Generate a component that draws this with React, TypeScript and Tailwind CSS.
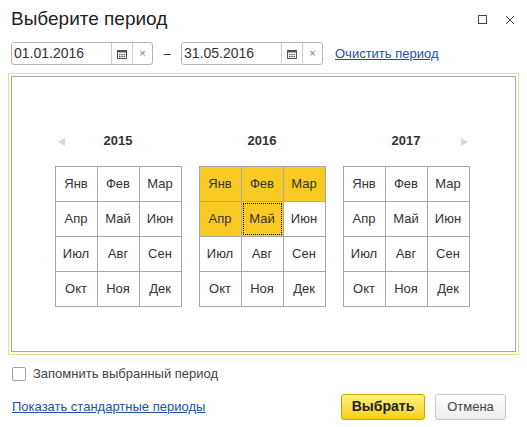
import React from "react";

const months = ["Янв","Фев","Мар","Апр","Май","Июн","Июл","Авг","Сен","Окт","Ноя","Дек"];

function Cal() {
  return (
    <svg width="10" height="10" viewBox="0 0 10 10">
      <rect x="0.5" y="1.5" width="9" height="8" fill="none" stroke="#555" />
      <rect x="0.5" y="1.5" width="9" height="2" fill="#555" />
      <rect x="2" y="5" width="1.5" height="1.2" fill="#555" /><rect x="4.3" y="5" width="1.5" height="1.2" fill="#555" /><rect x="6.6" y="5" width="1.5" height="1.2" fill="#555" />
      <rect x="2" y="7" width="1.5" height="1.2" fill="#555" /><rect x="4.3" y="7" width="1.5" height="1.2" fill="#555" /><rect x="6.6" y="7" width="1.5" height="1.2" fill="#555" />
    </svg>
  );
}

function DateInput({ v }: { v: string }) {
  return (
    <div className="flex h-[23px] w-[142px] rounded-[3px] border border-[#b5b5b5] bg-white">
      <div className="flex-1 pl-[2px] text-[14px] leading-[21px] text-[#333]">{v}</div>
      <div className="flex w-[21px] items-center justify-center border-l border-[#d0d0d0]"><Cal /></div>
      <div className="flex w-[20px] items-center justify-center border-l border-[#d0d0d0] text-[11px] text-[#777]">×</div>
    </div>
  );
}

function Year({ y, sel, focus, arrow }: { y: string; sel: number; focus?: number; arrow?: "l" | "r" }) {
  return (
    <div className="relative flex w-[127px] flex-col items-center">
      {arrow === "l" && <div className="absolute left-[3px] top-[7px] h-0 w-0 border-y-[4px] border-r-[7px] border-y-transparent border-r-[#d8d8d8]" />}
      {arrow === "r" && <div className="absolute right-[2px] top-[7px] h-0 w-0 border-y-[4px] border-l-[7px] border-y-transparent border-l-[#d8d8d8]" />}
      <div className="h-[35px] text-[13px] font-bold leading-[20px] text-[#333]">{y}</div>
      <div className="grid w-[127px] grid-cols-3 border-l border-t border-[#a8a8a8]">
        {months.map((m, i) => (
          <div key={m} className={`relative flex h-[35px] items-center justify-center border-b border-r border-[#a8a8a8] text-[13px] text-[#333] ${i < sel ? "bg-[#f9c924]" : "bg-white"}`}>
            {focus === i && <div className="absolute inset-[1px] border border-dotted border-black" />}
            {m}
          </div>
        ))}
      </div>
    </div>
  );
}

export default function App() {
  return (
    <div className="h-[427px] w-[527px] bg-white text-[#333]" style={{ fontFamily: "'Liberation Sans', Arial, sans-serif" }}>
      <div className="flex h-[38px] items-center pl-[11px] pr-[12px] pt-[1px]">
        <div className="flex-1 text-[19px] text-[#222]">Выберите период</div>
        <div className="mr-[18px] h-[9px] w-[9px] border border-[#444]" />
        <svg width="10" height="10" viewBox="0 0 10 10"><path d="M1 1L9 9M9 1L1 9" stroke="#444" strokeWidth="1" /></svg>
      </div>
      <div className="flex items-center pl-[11px] pt-[4px]">
        <DateInput v="01.01.2016" />
        <div className="w-[28px] text-center text-[13px]">–</div>
        <DateInput v="31.05.2016" />
        <a className="ml-[12px] text-[13px] text-[#1e50a2] underline">Очистить период</a>
      </div>
      <div className="mx-[8px] mt-[8px] border border-[#f0dc86] p-[2px]">
        <div className="flex h-[276px] justify-center gap-[17px] border border-[#a8a8a8] pr-[3px] pt-[54px]">
          <Year y="2015" sel={0} arrow="l" />
          <Year y="2016" sel={5} focus={4} />
          <Year y="2017" sel={0} arrow="r" />
        </div>
      </div>
      <div className="flex items-center pl-[12px] pt-[9px]">
        <div className="h-[14px] w-[14px] rounded-[2px] border border-[#a0a0a0] bg-white" />
        <span className="ml-[7px] text-[13px] text-[#444]">Запомнить выбранный период</span>
      </div>
      <div className="flex items-center pl-[12px] pr-[21px] pt-[10px]">
        <a className="flex-1 text-[13px] text-[#1e50a2] underline">Показать стандартные периоды</a>
        <div className="flex h-[26px] w-[84px] items-center justify-center rounded-[3px] border border-[#c9a400] bg-gradient-to-b from-[#fff176] to-[#f5d000] text-[14px] font-bold text-[#222]">Выбрать</div>
        <div className="ml-[10px] flex h-[26px] w-[71px] items-center justify-center rounded-[3px] border border-[#c8c8c8] bg-gradient-to-b from-white to-[#ececec] text-[13px] text-[#444]">Отмена</div>
      </div>
    </div>
  );
}
